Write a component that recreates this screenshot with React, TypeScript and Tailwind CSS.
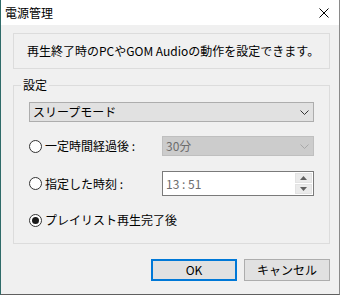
import React from 'react';

const font = { fontFamily: '"Noto Sans CJK JP", "Noto Sans", sans-serif' };

function Radio({ checked, label }: { checked?: boolean; label: string }) {
  return (
    <div className="flex min-w-[133px] items-center gap-[3px] whitespace-nowrap">
      <span className="flex h-[13px] w-[13px] shrink-0 items-center justify-center rounded-full border border-[#333333] bg-white">
        {checked && <span className="h-[7px] w-[7px] rounded-full bg-[#1a1a1a]" />}
      </span>
      <span className="text-[12px] leading-[16px] text-black">{label}</span>
    </div>
  );
}

function Chevron({ color }: { color: string }) {
  return (
    <svg width="9" height="5" viewBox="0 0 9 5" className="shrink-0">
      <path d="M0.5 0.5 L4.5 4.5 L8.5 0.5" fill="none" stroke={color} strokeWidth="1" />
    </svg>
  );
}

export default function App() {
  return (
    <div
      className="flex h-[295px] w-[340px] flex-col border-b border-l border-r border-b-[#5f5f5f] border-l-[#2f6b69] border-r-[#8a8a8a] bg-[#f0f0f0]"
      style={font}
    >
      {/* Title bar */}
      <div className="flex h-[25px] shrink-0 items-center justify-between bg-white pl-[4px] pr-[10px]">
        <span className="text-[12px] leading-[16px] text-black">電源管理</span>
        <svg width="10" height="10" viewBox="0 0 10 10">
          <path d="M0.5 0.5 L9.5 9.5 M9.5 0.5 L0.5 9.5" stroke="#000" strokeWidth="1" />
        </svg>
      </div>

      <div className="flex flex-col pl-[12px] pr-[9px]">
        {/* Info box */}
        <div className="mt-[8px] flex h-[36px] items-center border border-[#dcdcdc] pl-[13px]">
          <span className="whitespace-nowrap text-[12px] leading-[16px] text-black">
            再生終了時のPCやGOM Audioの動作を設定できます。
          </span>
        </div>

        {/* Group box */}
        <div className="relative mt-[16px] flex h-[159px] flex-col border border-[#dcdcdc] px-[15px] pt-[16px]">
          <span className="absolute left-[7px] top-[-9px] bg-[#f0f0f0] px-[2px] text-[12px] leading-[16px] text-black">
            設定
          </span>

          <div className="flex h-[20px] items-center justify-between border border-[#adadad] bg-[#e1e1e1] pl-[3px] pr-[4px]">
            <span className="text-[12px] leading-[16px] text-black">スリープモード</span>
            <Chevron color="#333333" />
          </div>

          <div className="mt-[14px] flex items-center">
            <Radio label="一定時間経過後 :" />
            <div className="flex h-[20px] flex-1 items-center justify-between border border-[#bfbfbf] bg-[#cccccc] pl-[3px] pr-[4px]">
              <span className="text-[12px] leading-[16px] text-[#6d6d6d]">30分</span>
              <Chevron color="#a8a8a8" />
            </div>
          </div>

          <div className="mt-[15px] flex items-center">
            <Radio label="指定した時刻 :" />
            <div className="flex h-[25px] flex-1 items-center justify-between border border-[#7a7a7a] bg-white pl-[3px] pr-[1px]">
              <span className="text-[12px] leading-[16px] text-[#6d6d6d]">13 : 51</span>
              <div className="flex h-[21px] w-[17px] flex-col gap-[1px]">
                <div className="flex flex-1 items-center justify-center border border-[#e3e3e3] bg-[#ebebeb]">
                  <svg width="7" height="4" viewBox="0 0 7 4">
                    <path d="M3.5 0 L7 4 L0 4 Z" fill="#606060" />
                  </svg>
                </div>
                <div className="flex flex-1 items-center justify-center border border-[#e3e3e3] bg-[#ebebeb]">
                  <svg width="7" height="4" viewBox="0 0 7 4">
                    <path d="M0 0 L7 0 L3.5 4 Z" fill="#606060" />
                  </svg>
                </div>
              </div>
            </div>
          </div>

          <div className="mt-[16px] flex items-center">
            <Radio checked label="プレイリスト再生完了後" />
          </div>
        </div>

        {/* Buttons */}
        <div className="mt-[15px] flex justify-end gap-[7px]">
          <button className="flex h-[22px] w-[86px] items-center justify-center border-2 border-[#0078d7] bg-[#e1e1e1] text-[12px] leading-[16px] text-black">
            OK
          </button>
          <button className="flex h-[22px] w-[86px] items-center justify-center border border-[#adadad] bg-[#e1e1e1] text-[12px] leading-[16px] text-black">
            キャンセル
          </button>
        </div>
      </div>
    </div>
  );
}
